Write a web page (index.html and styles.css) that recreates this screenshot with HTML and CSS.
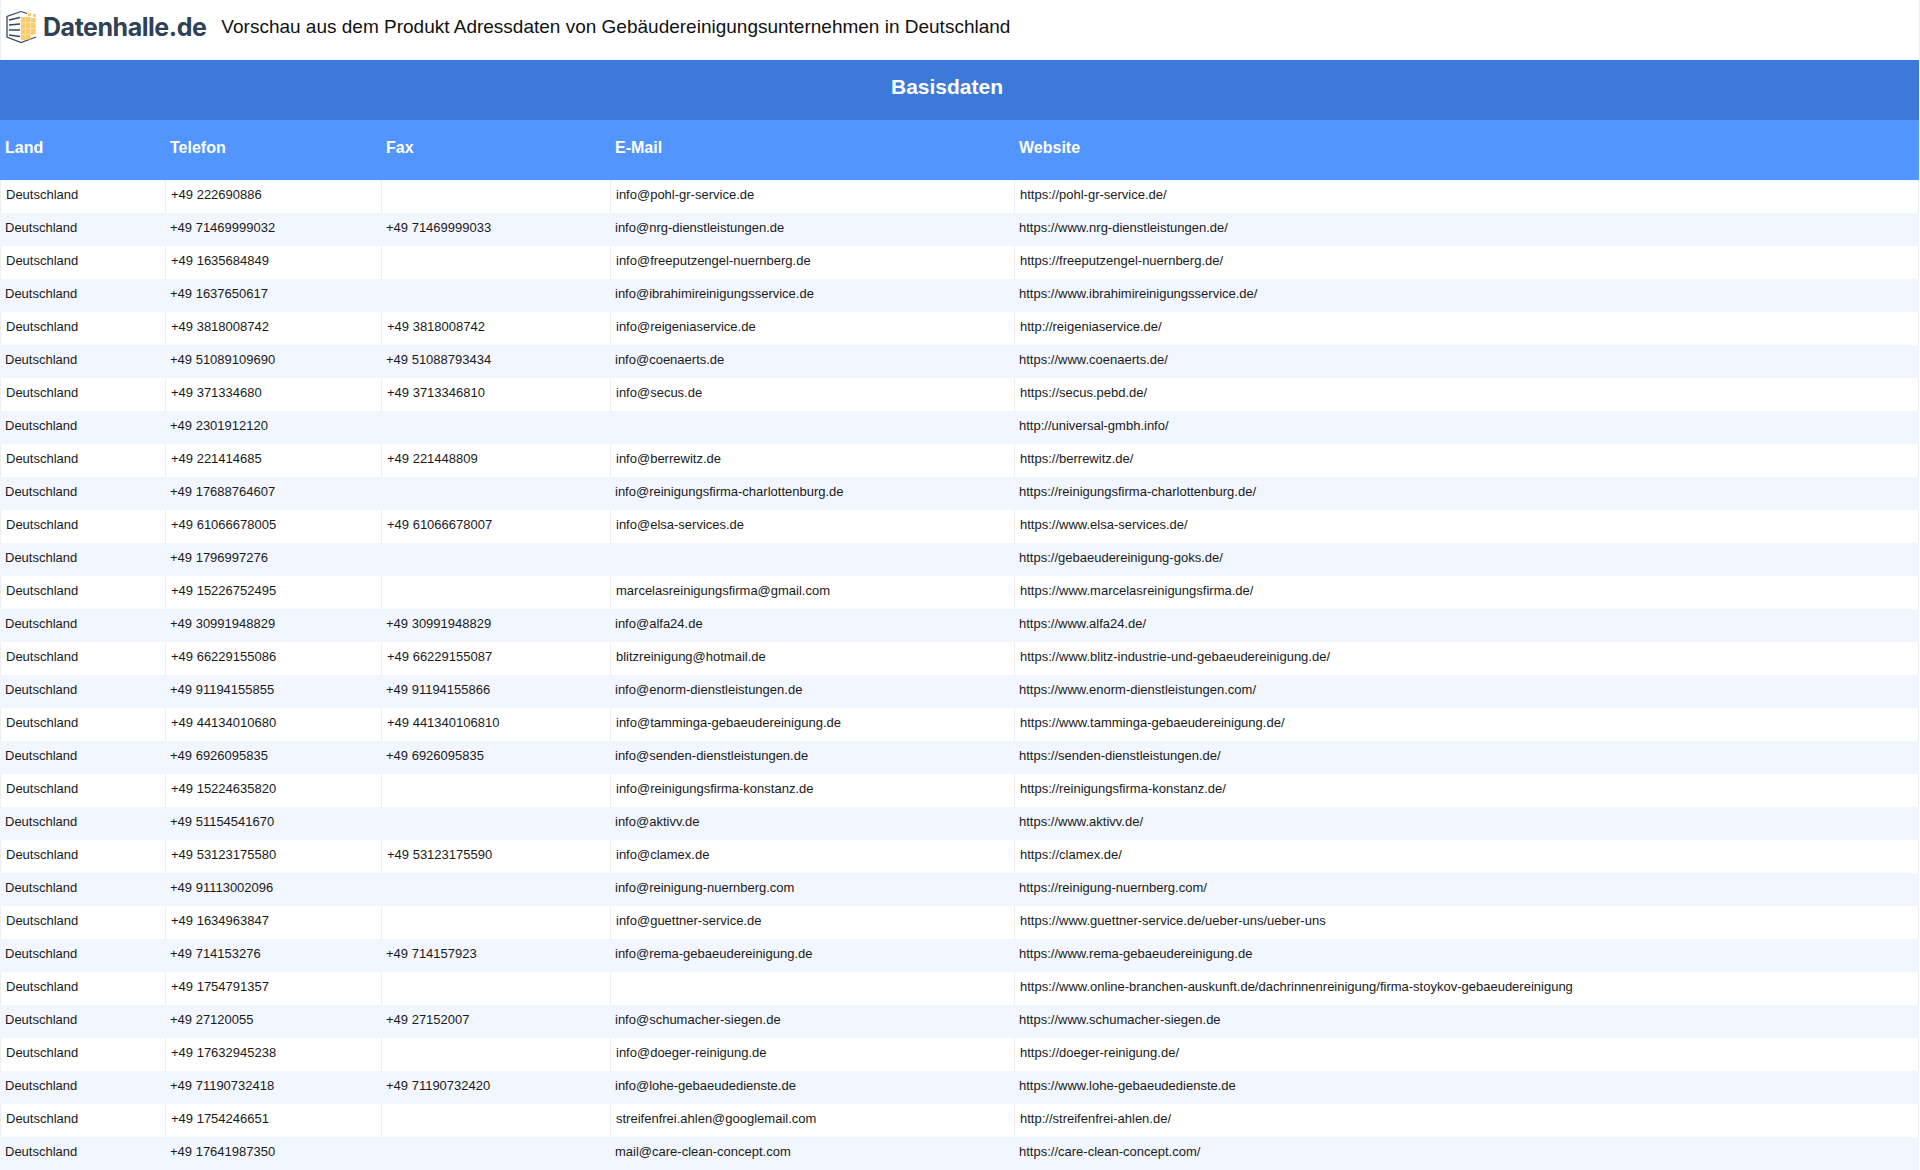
FILE: index.html
```html
<!DOCTYPE html>
<html lang="de">
<head>
<meta charset="utf-8">
<title>Vorschau</title>
<link rel="stylesheet" href="styles.css">
</head>
<body>
<header class="top">
  <div class="brand">
    <svg class="logo" width="32" height="34" viewBox="0 0 32 34" aria-hidden="true">
      <path d="M15 1.5 L1 6.5 V27 L15 32.5 L30 27" fill="none" stroke="#34495e" stroke-width="1.3"/>
      <path d="M15 1.5 L21 3.5" fill="none" stroke="#34495e" stroke-width="1.3"/>
      <g stroke="#34495e" stroke-width="1.5"><path d="M3 10 L14 7.5"/><path d="M3 15 L14 14"/><path d="M3 20 L14 20"/><path d="M3 25 L14 26.5"/></g>
      <g fill="#f9cc6b"><rect x="15" y="7" width="4.6" height="5.6"/><rect x="20" y="7" width="4.6" height="5.6"/><rect x="15" y="13" width="4.6" height="5.6"/><rect x="20" y="13" width="4.6" height="5.6"/><rect x="25" y="13" width="4.6" height="5.6"/><rect x="15" y="19" width="4.6" height="5.6"/><rect x="20" y="19" width="4.6" height="5.6"/><rect x="25" y="19" width="4.6" height="5.6"/><rect x="15" y="25" width="4.6" height="5"/><rect x="20" y="25" width="4.6" height="4.4"/><rect x="25" y="8" width="4.6" height="4.6"/><rect x="22" y="3" width="3" height="3"/><rect x="27" y="4" width="3" height="3"/></g>
    </svg>
    <span class="wordmark">Datenhalle.de</span>
  </div>
  <h1 class="title">Vorschau aus dem Produkt Adressdaten von Gebäudereinigungsunternehmen in Deutschland</h1>
</header>
<table class="data">
  <colgroup><col class="c1"><col class="c2"><col class="c3"><col class="c4"><col class="c5"></colgroup>
  <thead>
    <tr class="group"><th colspan="5">Basisdaten</th></tr>
    <tr class="cols"><th>Land</th><th>Telefon</th><th>Fax</th><th>E-Mail</th><th>Website</th></tr>
  </thead>
  <tbody>
    <tr><td>Deutschland</td><td>+49 222690886</td><td></td><td>info@pohl-gr-service.de</td><td>https://pohl-gr-service.de/</td></tr>
    <tr><td>Deutschland</td><td>+49 71469999032</td><td>+49 71469999033</td><td>info@nrg-dienstleistungen.de</td><td>https://www.nrg-dienstleistungen.de/</td></tr>
    <tr><td>Deutschland</td><td>+49 1635684849</td><td></td><td>info@freeputzengel-nuernberg.de</td><td>https://freeputzengel-nuernberg.de/</td></tr>
    <tr><td>Deutschland</td><td>+49 1637650617</td><td></td><td>info@ibrahimireinigungsservice.de</td><td>https://www.ibrahimireinigungsservice.de/</td></tr>
    <tr><td>Deutschland</td><td>+49 3818008742</td><td>+49 3818008742</td><td>info@reigeniaservice.de</td><td>http://reigeniaservice.de/</td></tr>
    <tr><td>Deutschland</td><td>+49 51089109690</td><td>+49 51088793434</td><td>info@coenaerts.de</td><td>https://www.coenaerts.de/</td></tr>
    <tr><td>Deutschland</td><td>+49 371334680</td><td>+49 3713346810</td><td>info@secus.de</td><td>https://secus.pebd.de/</td></tr>
    <tr><td>Deutschland</td><td>+49 2301912120</td><td></td><td></td><td>http://universal-gmbh.info/</td></tr>
    <tr><td>Deutschland</td><td>+49 221414685</td><td>+49 221448809</td><td>info@berrewitz.de</td><td>https://berrewitz.de/</td></tr>
    <tr><td>Deutschland</td><td>+49 17688764607</td><td></td><td>info@reinigungsfirma-charlottenburg.de</td><td>https://reinigungsfirma-charlottenburg.de/</td></tr>
    <tr><td>Deutschland</td><td>+49 61066678005</td><td>+49 61066678007</td><td>info@elsa-services.de</td><td>https://www.elsa-services.de/</td></tr>
    <tr><td>Deutschland</td><td>+49 1796997276</td><td></td><td></td><td>https://gebaeudereinigung-goks.de/</td></tr>
    <tr><td>Deutschland</td><td>+49 15226752495</td><td></td><td>marcelasreinigungsfirma@gmail.com</td><td>https://www.marcelasreinigungsfirma.de/</td></tr>
    <tr><td>Deutschland</td><td>+49 30991948829</td><td>+49 30991948829</td><td>info@alfa24.de</td><td>https://www.alfa24.de/</td></tr>
    <tr><td>Deutschland</td><td>+49 66229155086</td><td>+49 66229155087</td><td>blitzreinigung@hotmail.de</td><td>https://www.blitz-industrie-und-gebaeudereinigung.de/</td></tr>
    <tr><td>Deutschland</td><td>+49 91194155855</td><td>+49 91194155866</td><td>info@enorm-dienstleistungen.de</td><td>https://www.enorm-dienstleistungen.com/</td></tr>
    <tr><td>Deutschland</td><td>+49 44134010680</td><td>+49 441340106810</td><td>info@tamminga-gebaeudereinigung.de</td><td>https://www.tamminga-gebaeudereinigung.de/</td></tr>
    <tr><td>Deutschland</td><td>+49 6926095835</td><td>+49 6926095835</td><td>info@senden-dienstleistungen.de</td><td>https://senden-dienstleistungen.de/</td></tr>
    <tr><td>Deutschland</td><td>+49 15224635820</td><td></td><td>info@reinigungsfirma-konstanz.de</td><td>https://reinigungsfirma-konstanz.de/</td></tr>
    <tr><td>Deutschland</td><td>+49 51154541670</td><td></td><td>info@aktivv.de</td><td>https://www.aktivv.de/</td></tr>
    <tr><td>Deutschland</td><td>+49 53123175580</td><td>+49 53123175590</td><td>info@clamex.de</td><td>https://clamex.de/</td></tr>
    <tr><td>Deutschland</td><td>+49 91113002096</td><td></td><td>info@reinigung-nuernberg.com</td><td>https://reinigung-nuernberg.com/</td></tr>
    <tr><td>Deutschland</td><td>+49 1634963847</td><td></td><td>info@guettner-service.de</td><td>https://www.guettner-service.de/ueber-uns/ueber-uns</td></tr>
    <tr><td>Deutschland</td><td>+49 714153276</td><td>+49 714157923</td><td>info@rema-gebaeudereinigung.de</td><td>https://www.rema-gebaeudereinigung.de</td></tr>
    <tr><td>Deutschland</td><td>+49 1754791357</td><td></td><td></td><td>https://www.online-branchen-auskunft.de/dachrinnenreinigung/firma-stoykov-gebaeudereinigung</td></tr>
    <tr><td>Deutschland</td><td>+49 27120055</td><td>+49 27152007</td><td>info@schumacher-siegen.de</td><td>https://www.schumacher-siegen.de</td></tr>
    <tr><td>Deutschland</td><td>+49 17632945238</td><td></td><td>info@doeger-reinigung.de</td><td>https://doeger-reinigung.de/</td></tr>
    <tr><td>Deutschland</td><td>+49 71190732418</td><td>+49 71190732420</td><td>info@lohe-gebaeudedienste.de</td><td>https://www.lohe-gebaeudedienste.de</td></tr>
    <tr><td>Deutschland</td><td>+49 1754246651</td><td></td><td>streifenfrei.ahlen@googlemail.com</td><td>http://streifenfrei-ahlen.de/</td></tr>
    <tr><td>Deutschland</td><td>+49 17641987350</td><td></td><td>mail@care-clean-concept.com</td><td>https://care-clean-concept.com/</td></tr>
  </tbody>
</table>
</body>
</html>
```
FILE: styles.css
```css
* { box-sizing: border-box; }
html, body { margin: 0; padding: 0; background: #fff; }
body { font-family: "Liberation Sans", Arial, sans-serif; color: #000; overflow: hidden; height: 1170px; }
.top { display: flex; align-items: center; height: 60px; padding: 0 0 6px 5px; gap: 15px; border-left: 1px solid #eee; border-right: 1px solid #eee; }
.brand { display: flex; align-items: center; gap: 5px; }
.logo { display: block; }
.wordmark { font-family: Inter, sans-serif; font-weight: 700; font-size: 25px; letter-spacing: -0.47px; color: #2f4254; }
.title { margin: 0; font-size: 19px; font-weight: 400; color: #111; }
.data { width: 1919px; table-layout: fixed; border-collapse: separate; border-spacing: 0; }
.c1 { width: 165px; } .c2 { width: 216px; } .c3 { width: 229px; } .c4 { width: 404px; } .c5 { width: 905px; }
th { color: #fff; font-weight: 700; padding: 0; }
.group th { height: 60px; background: #3d79d8; font-size: 21px; text-align: center; padding: 0 25px 7px 0; }
.cols th { height: 60px; background: #5295ff; font-size: 16px; text-align: left; padding: 0 5px 4px; }
td { height: 33px; padding: 0 5px 4px; font-size: 13px; color: #1a1a1a; white-space: nowrap; overflow: visible; border-left: 1px solid #eee; }
tbody tr:nth-child(odd) td:last-child { border-right: 1px solid #eee; }
tbody tr:nth-child(even) td { background: #f2f6fe; border-left: 0; }
```
